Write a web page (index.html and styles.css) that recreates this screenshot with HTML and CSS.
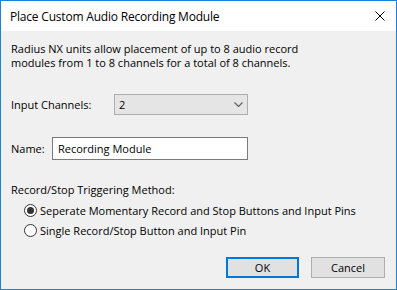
FILE: index.html
```html
<!DOCTYPE html>
<html lang="en">
<head>
<meta charset="UTF-8">
<title>Place Custom Audio Recording Module</title>
<link rel="stylesheet" href="styles.css">
</head>
<body>

<div class="dialog">
  <div class="titlebar">
    <span class="title">Place Custom Audio Recording Module</span>
    <svg class="close" width="10" height="10" viewBox="0 0 10 10">
      <path d="M0.5 0.5 L9.5 9.5 M9.5 0.5 L0.5 9.5" stroke="#000" stroke-width="1" fill="none"/>
    </svg>
  </div>

  <div class="content">
    <p class="intro">Radius NX units allow placement of up to 8 audio record<br>modules from 1 to 8 channels for a total of 8 channels.</p>

    <div class="row channels">
      <span class="label">Input Channels:</span>
      <div class="combo">
        <span>2</span>
        <svg width="9" height="5" viewBox="0 0 9 5">
          <path d="M0.5 0.5 L4.5 4.5 L8.5 0.5" stroke="#606060" stroke-width="1.2" fill="none"/>
        </svg>
      </div>
    </div>

    <div class="row name">
      <span class="label">Name:</span>
      <div class="textbox">Recording Module</div>
    </div>

    <div class="group-label">Record/Stop Triggering Method:</div>
    <div class="radios">
      <div class="radio-row">
        <span class="radio checked"></span>
        <span>Seperate Momentary Record and Stop Buttons and Input Pins</span>
      </div>
      <div class="radio-row">
        <span class="radio"></span>
        <span>Single Record/Stop Button and Input Pin</span>
      </div>
    </div>

    <div class="buttons">
      <div class="btn default">OK</div>
      <div class="btn">Cancel</div>
    </div>
  </div>
</div>

</body>
</html>
```

FILE: styles.css
```css
html, body {
  margin: 0;
  padding: 0;
}

body {
  font-family: "Open Sans", "Liberation Sans", sans-serif;
  font-size: 11px;
  color: #000;
  background: #f0f0f0;
}

.dialog {
  width: 397px;
  height: 290px;
  box-sizing: border-box;
  border: 1px solid #1883d7;
  display: flex;
  flex-direction: column;
  background: #f0f0f0;
}

.titlebar {
  height: 30px;
  background: #fff;
  display: flex;
  align-items: center;
  justify-content: space-between;
  padding: 0 10px 0 9px;
}

.title {
  font-size: 12px;
  letter-spacing: -0.2px;
}

.close {
  margin-right: 1px;
}

.content {
  flex: 1;
  padding: 0 11px 0 10px;
  display: flex;
  flex-direction: column;
}

.intro {
  margin: 11px 0 0 0;
  line-height: 14px;
}

.row {
  display: flex;
  align-items: center;
}

.channels {
  margin-top: 24px;
}

.channels .label {
  width: 103px;
}

.combo {
  width: 134px;
  height: 21px;
  box-sizing: border-box;
  border: 1px solid #adadad;
  background: #e5e5e5;
  display: flex;
  align-items: center;
  justify-content: space-between;
  padding: 0 4px 0 4px;
}

.name {
  margin-top: 22px;
}

.name .label {
  width: 41px;
}

.textbox {
  width: 196px;
  height: 23px;
  box-sizing: border-box;
  border: 1px solid #7a7a7a;
  background: #fff;
  display: flex;
  align-items: center;
  padding-left: 5px;
}

.group-label {
  margin-top: 22px;
  line-height: 16px;
}

.radios {
  margin-top: 2px;
}

.radio-row {
  display: flex;
  align-items: center;
  height: 20px;
  padding-left: 13px;
}

.radio {
  width: 13px;
  height: 13px;
  box-sizing: border-box;
  border: 1px solid #333;
  border-radius: 50%;
  background: #fff;
  margin-right: 3px;
  position: relative;
}

.radio.checked::after {
  content: "";
  position: absolute;
  left: 2px;
  top: 2px;
  width: 7px;
  height: 7px;
  border-radius: 50%;
  background: #333;
}

.buttons {
  display: flex;
  justify-content: flex-end;
  gap: 12px;
  margin-top: 17px;
}

.btn {
  width: 74px;
  height: 21px;
  box-sizing: border-box;
  border: 1px solid #adadad;
  background: #e1e1e1;
  display: flex;
  align-items: center;
  justify-content: center;
}

.btn.default {
  border: 2px solid #0078d7;
  width: 73px;
}
```
